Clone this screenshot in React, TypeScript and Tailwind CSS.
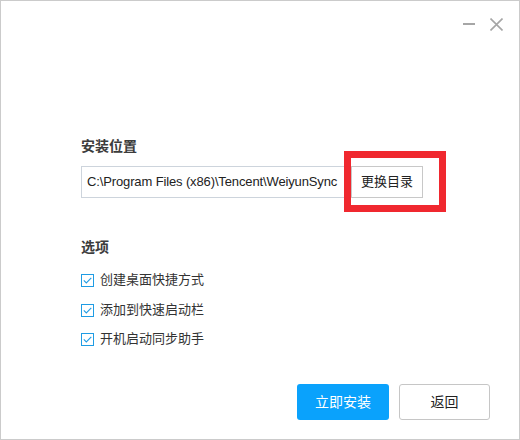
import { useState } from "react";

const font = "font-['Liberation_Sans','Noto_Sans_CJK_SC',sans-serif]";

const options = [
  { id: "desktop", label: "创建桌面快捷方式", mt: "mt-[13px]" },
  { id: "quicklaunch", label: "添加到快速启动栏", mt: "mt-[10px]" },
  { id: "autostart", label: "开机启动同步助手", mt: "mt-[9px]" },
];

function CheckBox({ checked, onToggle }: { checked: boolean; onToggle: () => void }) {
  return (
    <button
      type="button"
      onClick={onToggle}
      className="w-[13px] h-[13px] border border-[#1f9ce4] bg-white flex items-center justify-center shrink-0"
    >
      {checked && (
        <svg width="9" height="7" viewBox="0 0 9 7" fill="none">
          <path d="M0.8 3.4 L3.3 5.9 L8.3 0.8" stroke="#1f9ce4" strokeWidth="1.1" />
        </svg>
      )}
    </button>
  );
}

export default function App() {
  const [checked, setChecked] = useState<Record<string, boolean>>({
    desktop: true,
    quicklaunch: true,
    autostart: true,
  });
  const [path] = useState("C:\\Program Files (x86)\\Tencent\\WeiyunSync");

  return (
    <div className={`w-[520px] h-[440px] bg-white border border-[#cbcbcb] flex flex-col ${font}`}>
      {/* 窗口按钮 */}
      <div className="h-[46px] flex justify-end items-center pr-[16px] gap-[15px]">
        <button type="button" className="w-[12px] h-[13px] flex items-center">
          <svg width="12" height="2" viewBox="0 0 12 2">
            <rect x="0" y="0" width="12" height="2" fill="#a6a6a6" />
          </svg>
        </button>
        <button type="button" className="w-[13px] h-[13px]">
          <svg width="13" height="13" viewBox="0 0 13 13">
            <path d="M0.5 0.5 L12.5 12.5 M12.5 0.5 L0.5 12.5" stroke="#a6a6a6" strokeWidth="1.6" />
          </svg>
        </button>
      </div>

      <div className="pl-[80px] pt-[89px] flex flex-col">
        {/* 安装位置 */}
        <div className="text-[14px] leading-[20px] font-bold text-[#3c3c3c]">安装位置</div>
        <div className="mt-[10px] h-[32px] flex">
          <div className="w-[270px] h-full border border-r-0 border-[#cdd4dc] pl-[5px] flex items-center text-[13px] tracking-[-0.13px] text-[#222] whitespace-nowrap overflow-hidden">
            {path}
          </div>
          <div className="relative">
            <button
              type="button"
              className="w-[72px] h-[32px] border border-[#c8c8c8] bg-white text-[13px] text-[#222]"
            >
              更换目录
            </button>
            <div className="absolute left-[-7px] top-[-15px] w-[102px] h-[61px] border-[7px] border-[#f0282f] pointer-events-none" />
          </div>
        </div>

        {/* 选项 */}
        <div className="mt-[39px] text-[14px] leading-[20px] font-bold text-[#3c3c3c]">选项</div>
        {options.map(o => (
          <label key={o.id} className={`${o.mt} h-[20px] flex items-center gap-[6px] text-[13px] text-[#333]`}>
            <CheckBox
              checked={checked[o.id]}
              onToggle={() => setChecked(c => ({ ...c, [o.id]: !c[o.id] }))}
            />
            <span>{o.label}</span>
          </label>
        ))}
      </div>

      {/* 底部按钮 */}
      <div className="mt-[35px] flex justify-end gap-[10px] pr-[29px]">
        <button type="button" className="w-[92px] h-[36px] rounded-[3px] bg-[#0aa2fc] text-white text-[14px]">
          立即安装
        </button>
        <button
          type="button"
          className="w-[91px] h-[36px] rounded-[3px] border border-[#c6c6c6] bg-white text-[#222] text-[14px]"
        >
          返回
        </button>
      </div>
    </div>
  );
}
